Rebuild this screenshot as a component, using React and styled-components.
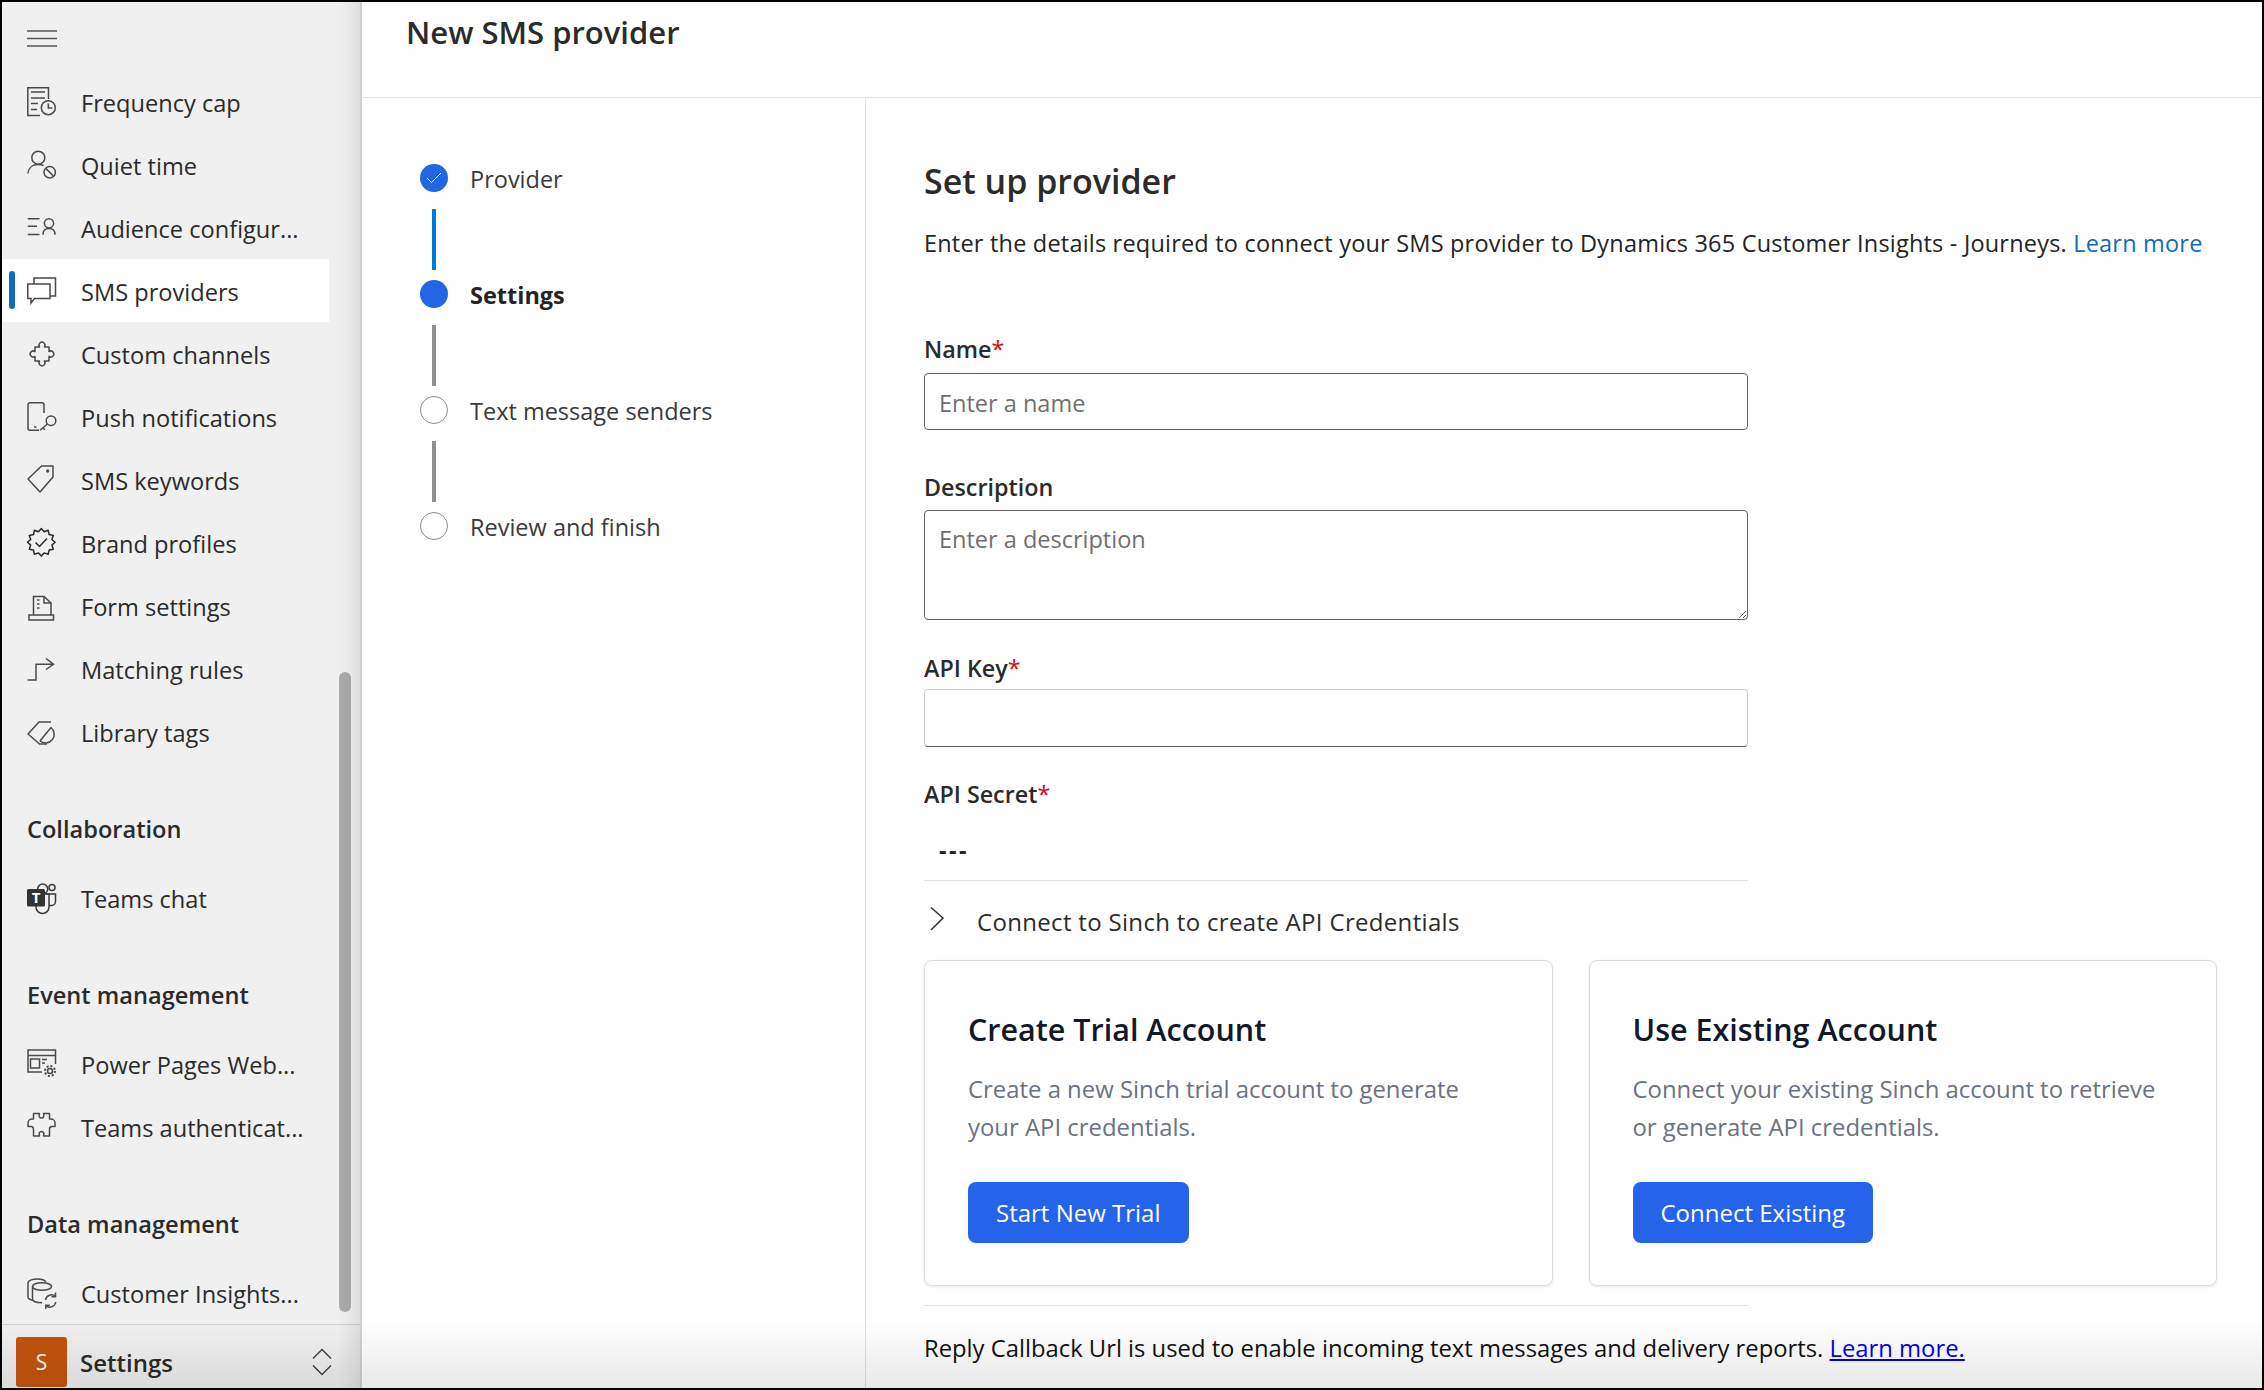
import React from "react";
import styled, { createGlobalStyle } from "styled-components";

const GlobalStyle = createGlobalStyle`
  html, body { margin: 0; padding: 0; background: #fff; }
  * { box-sizing: border-box; }
  body { font-family: "Open Sans", "Noto Sans", sans-serif; color: #242424; }
`;

const Frame = styled.div`
  position: relative;
  display: flex;
  width: 2264px;
  height: 1390px;
  border: 2px solid #000;
  overflow: hidden;
  background: #fff;
`;
const BottomFade = styled.div`
  position: absolute;
  left: 0;
  right: 0;
  bottom: 0;
  height: 68px;
  pointer-events: none;
  background: linear-gradient(rgba(0, 0, 0, 0), rgba(0, 0, 0, 0.09));
`;
const Sidebar = styled.aside`
  position: relative;
  flex: 0 0 360px;
  display: flex;
  flex-direction: column;
  background: #f0f0f0;
  border-right: 2px solid #cfcfcf;
  &:after {
    content: "";
    position: absolute;
    top: 0;
    right: 0;
    bottom: 0;
    width: 22px;
    pointer-events: none;
    background: linear-gradient(90deg, rgba(0, 0, 0, 0), rgba(0, 0, 0, 0.07));
  }
`;
const Hamburger = styled.div`
  height: 68.3px;
  padding: 28px 0 0 25px;
  svg {
    display: block;
  }
`;
const IconSvg = styled.svg`
  flex: 0 0 30px;
  width: 30px;
  height: 30px;
  overflow: visible;
`;
const TeamsLetter = styled.text`
  font-family: "Open Sans", sans-serif;
  font-size: 15px;
  font-weight: 700;
  fill: #fff;
  stroke: none;
`;
const NavRow = styled.div`
  position: relative;
  display: flex;
  align-items: center;
  gap: 24px;
  width: 327px;
  height: 63px;
  padding-left: 25px;
  font-size: 23.6px;
  white-space: nowrap;
  color: #2b2b2b;
  background: ${(p) => (p.$active ? "#fff" : "transparent")};
  span {
    position: relative;
    top: 1.5px;
  }
  &:before {
    content: "";
    display: ${(p) => (p.$active ? "block" : "none")};
    position: absolute;
    left: 7px;
    top: 12px;
    width: 6px;
    height: 38px;
    border-radius: 3px;
    background: #0f6cbd;
  }
`;
const GroupTitle = styled.div`
  display: flex;
  align-items: center;
  height: 63px;
  margin: 34.5px 0 5.5px;
  padding-left: 25px;
  font-size: 23.6px;
  font-weight: 600;
  color: #2b2b2b;
`;
const ScrollThumb = styled.div`
  position: absolute;
  left: 337px;
  top: 670px;
  width: 12px;
  height: 640px;
  border-radius: 6px;
  background: #ababab;
`;
const SidebarFooter = styled.div`
  display: flex;
  align-items: center;
  flex: 1;
  padding: 11px 28px 0 14px;
  border-top: 1.5px solid #d2d2d2;
`;
const Avatar = styled.div`
  display: flex;
  align-items: center;
  justify-content: center;
  width: 51px;
  height: 50px;
  border-radius: 3px;
  background: #c4550e;
  color: #fff;
  font-size: 21px;
`;
const AreaName = styled.div`
  flex: 1;
  margin-left: 13px;
  font-size: 24px;
  font-weight: 600;
  color: #2b2b2b;
`;
const Main = styled.main`
  flex: 1;
  display: flex;
  flex-direction: column;
  min-width: 0;
`;
const Header = styled.header`
  flex: 0 0 95.5px;
  padding: 9px 0 0 44px;
  border-bottom: 1.5px solid #e1e1e1;
  font-size: 31px;
  line-height: 42px;
  font-weight: 600;
  color: #2b2b2b;
`;
const Body = styled.div`
  flex: 1;
  display: flex;
  min-height: 0;
`;
const StepPanel = styled.nav`
  flex: 0 0 504px;
  padding: 66px 0 0 58px;
  border-right: 1.5px solid #e1e1e1;
`;
const Step = styled.div`
  display: flex;
  align-items: center;
  gap: 22px;
  height: 28px;
`;
const StepDot = styled.div`
  display: flex;
  align-items: center;
  justify-content: center;
  width: 28px;
  height: 28px;
  border-radius: 50%;
  border: ${(p) => (p.$state === "todo" ? "1px solid #8a8a8a" : "none")};
  background: ${(p) => (p.$state === "todo" ? "#fff" : "#2266e3")};
`;
const StepLabel = styled.span`
  position: relative;
  top: 1px;
  font-size: 23.5px;
  font-weight: ${(p) => (p.$state === "current" ? 700 : 400)};
  color: ${(p) => (p.$state === "current" ? "#242424" : "#3a3a3a")};
`;
const Connector = styled.div`
  width: 4px;
  height: 61px;
  margin: 17px 0 10px 12px;
  background: ${(p) => (p.$done ? "#0078d4" : "#8f8f8f")};
`;
const Content = styled.section`
  flex: 1;
  min-width: 0;
  padding: 63px 45px 0 58px;
`;
const Heading = styled.h2`
  margin: 0;
  font-size: 34px;
  line-height: 40px;
  font-weight: 600;
  color: #2b2b2b;
`;
const Intro = styled.p`
  margin: 28px 0 0;
  font-size: 23.5px;
  line-height: 28px;
  letter-spacing: 0.2px;
  white-space: nowrap;
  color: #242424;
`;
const BlueLink = styled.a`
  color: #0f6cbd;
  text-decoration: none;
`;
const FieldLabel = styled.div`
  margin-top: ${(p) => p.$top}px;
  font-size: 23.3px;
  line-height: 28px;
  font-weight: 600;
  color: #2b2b2b;
`;
const Required = styled.span`
  color: #e00000;
  font-weight: 400;
`;
const TextInput = styled.input`
  display: block;
  width: 824px;
  height: 57px;
  margin-top: 10px;
  padding: 3px 14px 0;
  border: 1.5px solid #616161;
  border-radius: 4px;
  outline: none;
  font: inherit;
  font-size: 23.5px;
  &::placeholder {
    color: #707070;
  }
`;
const KeyInput = styled(TextInput)`
  height: 58px;
  margin-top: 7px;
  border-color: #d1d1d1;
  border-bottom-color: #616161;
`;
const TextArea = styled.textarea`
  display: block;
  width: 824px;
  height: 110px;
  margin-top: 9px;
  padding: 12px 14px;
  border: 1.5px solid #616161;
  border-radius: 4px;
  outline: none;
  font: inherit;
  font-size: 23.5px;
  &::placeholder {
    color: #707070;
  }
`;
const ReadOnly = styled.div`
  width: 824px;
  height: 73px;
  padding: 28px 0 0 15px;
  border-bottom: 1.5px solid #e1e1e1;
  font-size: 23.5px;
  line-height: 28px;
  font-weight: 700;
  letter-spacing: 2.5px;
  color: #242424;
`;
const Accordion = styled.div`
  display: flex;
  align-items: center;
  height: 28px;
  margin-top: 27px;
  padding-left: 5px;
  font-size: 24px;
  font-weight: 500;
  letter-spacing: 0.32px;
  color: #2b2b2b;
  svg {
    position: relative;
    top: -3px;
  }
  span {
    margin-left: 32px;
  }
`;
const Cards = styled.div`
  display: grid;
  grid-template-columns: 1fr 1fr;
  gap: 36px;
  margin-top: 24px;
`;
const Card = styled.div`
  height: 326px;
  padding: 48px 43px 0;
  border: 1.5px solid #dcdce0;
  border-radius: 8px;
  box-shadow: 0 1px 3px rgba(0, 0, 0, 0.1);
`;
const CardTitle = styled.h3`
  margin: 0;
  font-size: 30.5px;
  line-height: 40px;
  font-weight: 600;
  color: #111827;
`;
const CardText = styled.p`
  margin: 21.5px 0 0;
  font-size: 23.9px;
  line-height: 38px;
  color: #6b7280;
`;
const PrimaryButton = styled.button`
  display: block;
  height: 61px;
  margin-top: 35.5px;
  padding: 0 28px;
  border: none;
  border-radius: 8px;
  background: #2563eb;
  color: #fff;
  font: inherit;
  font-size: 24px;
`;
const Rule = styled.div`
  width: 824px;
  height: 1.5px;
  margin-top: 19px;
  background: #e1e1e1;
`;
const Reply = styled.p`
  margin: 28px 0 0;
  font-size: 23.8px;
  line-height: 28px;
  white-space: nowrap;
  color: #111;
`;
const ReplyLink = styled.a`
  color: #0000ee;
  text-decoration: underline;
`;

const badgePath = () => {
  const pts = [];
  const n = 12;
  for (let i = 0; i < n * 2; i++) {
    const r = i % 2 === 0 ? 13.8 : 11;
    const a = (Math.PI * i) / n - Math.PI / 2;
    pts.push(`${(14.3 + r * Math.cos(a)).toFixed(1)} ${(14.3 + r * Math.sin(a)).toFixed(1)}`);
  }
  return `M${pts.join("L")}Z`;
};

const Glyph = ({ children, dark }) => (
  <IconSvg viewBox="0 0 30 30" fill="none" stroke={dark ? "#2a2a2a" : "#4a4a4a"} strokeWidth="1.5">
    {children}
  </IconSvg>
);

const icons = {
  frequency: (
    <Glyph>
      <path d="M21.5 12V.8H.8v27.7H13" />
      <path d="M4 5h14M4 11h14M4 16.5h7M4 22.5h6" />
      <circle cx="21.3" cy="20.7" r="7" />
      <path d="M21.3 16.5v4.5h4" />
    </Glyph>
  ),
  quiet: (
    <Glyph>
      <circle cx="11.3" cy="7.7" r="6.5" />
      <path d="M.8 23.5C1.5 17.5 6 14.5 11 14.5c2 0 4 .4 5.5 1" />
      <circle cx="22.7" cy="22.3" r="5.7" />
      <path d="M18.8 18.4l7.8 7.8" />
    </Glyph>
  ),
  audience: (
    <Glyph>
      <path d="M.8 5.7h11.7M.8 13.3H10M.8 21.5h11.7" />
      <circle cx="22" cy="10.3" r="4.6" />
      <path d="M16 21.7c0-4.2 2.5-6.2 6-6.2s6 2 6 6.2" />
    </Glyph>
  ),
  sms: (
    <Glyph>
      <path d="M.8 8H23v14.5H7.5L4 27v-4.5H.8z" />
      <path d="M7 8V2h21.5v18H23" />
    </Glyph>
  ),
  custom: (
    <Glyph>
      <path d="M8 8h4.600a3 3 0 1 1 4.800 0H22v4.600a3 3 0 1 1 0 4.800V22h-4.600a3 3 0 1 1-4.800 0H8v-4.600a3 3 0 1 1 0-4.800z" strokeLinejoin="round" />
    </Glyph>
  ),
  push: (
    <Glyph>
      <path d="M12 28.3H3a2 2 0 0 1-2-2V2.7a2 2 0 0 1 2-2h12a2 2 0 0 1 2 2V11" />
      <path d="M7 25h2.5" />
      <circle cx="24" cy="18.7" r="4.8" />
      <path d="M20.5 22l-7.5 6.3M16 26l1.8 1.8" />
    </Glyph>
  ),
  keywords: (
    <Glyph>
      <path d="M14.5 1H26v11L13 27 1 14z" strokeLinejoin="round" />
      <circle cx="20.7" cy="6" r=".9" fill="#4a4a4a" />
    </Glyph>
  ),
  brand: (
    <Glyph dark>
      <path d={badgePath()} strokeLinejoin="round" />
      <path d="M8.5 14.5l4 4 7.5-8" />
    </Glyph>
  ),
  form: (
    <Glyph>
      <path d="M6.5 24V5.5H17l7 6.5v12" />
      <path d="M17 5.5V12h7" />
      <path d="M2 24h24.5v5H2z" />
      <path d="M10 9h2.5M10 13h2.5M10 17h2.5" />
    </Glyph>
  ),
  matching: (
    <Glyph>
      <path d="M.5 26H9V10.3h17.5" />
      <path d="M19 4.5l7.5 5.8-7.5 5.2" />
    </Glyph>
  ),
  tags: (
    <Glyph>
      <path d="M24 5H12L1 17l11.5 10H20" strokeLinejoin="round" />
      <path d="M24 10.5A8 8 0 1 1 13 24" />
      <path d="M13 24l11-13.5" />
    </Glyph>
  ),
  teams: (
    <IconSvg viewBox="0 0 30 30" fill="none" stroke="#3a3a3a" strokeWidth="1.5">
      <circle cx="15.7" cy="6" r="5" />
      <circle cx="25" cy="4.5" r="3" />
      <path d="M19 11h9.5v7.5a4 4 0 0 1-4 4H22" />
      <path d="M9 23v1a6.5 6.5 0 0 0 13 0V11h-4" />
      <rect x="0" y="6" width="18" height="17.5" rx="1.5" fill="#333" stroke="none" />
      <TeamsLetter x="9" y="20" textAnchor="middle">T</TeamsLetter>
    </IconSvg>
  ),
  pages: (
    <Glyph>
      <path d="M15 23H1V1h27.5v14" />
      <path d="M1 6.5h27.5M3.5 10h9v9h-9zM15 10.5h5M15 14h3" />
      <circle cx="23" cy="22" r="2.5" />
      <circle cx="23" cy="22" r="5" strokeWidth="2" strokeDasharray="2 1.9" />
    </Glyph>
  ),
  auth: (
    <Glyph>
      <path d="M6.5 7V1.5h6c-1 3 0 4.5 2 4.5s3-1.5 2-4.5h6V7h1.5a4 4 0 0 1 4 4v3.5h-3c-1.8 0-2.5 1-2.5 2.5V24h-6c1-3 0-4.5-2-4.5s-3 1.5-2 4.5h-6v-6.5c0-2-1-3-2.5-3h-3V11a4 4 0 0 1 4-4z" strokeLinejoin="round" />
    </Glyph>
  ),
  insights: (
    <Glyph>
      <path d="M19 4c-1-1.7-4.5-3-8.5-3C5 1 1 2.7 1 5v14c0 1.5 2 2.7 4.5 3.3" />
      <ellipse cx="15" cy="8.5" rx="9.5" ry="3.8" />
      <path d="M5.5 8.5V21c0 2 3.5 3.8 9.5 3.8" />
      <path d="M18.5 22a6 6 0 0 1 10-3.5M28.5 14.5v4.2h-4M28.8 24a6 6 0 0 1-10 3.5M18.8 31v-3.7h4" />
    </Glyph>
  ),
};

const sections = [
  {
    items: [
      ["frequency", "Frequency cap"],
      ["quiet", "Quiet time"],
      ["audience", "Audience configur..."],
      ["sms", "SMS providers", true],
      ["custom", "Custom channels"],
      ["push", "Push notifications"],
      ["keywords", "SMS keywords"],
      ["brand", "Brand profiles"],
      ["form", "Form settings"],
      ["matching", "Matching rules"],
      ["tags", "Library tags"],
    ],
  },
  { title: "Collaboration", items: [["teams", "Teams chat"]] },
  {
    title: "Event management",
    items: [
      ["pages", "Power Pages Web..."],
      ["auth", "Teams authenticat..."],
    ],
  },
  { title: "Data management", items: [["insights", "Customer Insights..."]] },
];

const steps = [
  { label: "Provider", state: "done" },
  { label: "Settings", state: "current" },
  { label: "Text message senders", state: "todo" },
  { label: "Review and finish", state: "todo" },
];

export default function App() {
  return (
    <>
      <GlobalStyle />
      <Frame>
        <Sidebar>
          <Hamburger>
            <svg width="30" height="17" viewBox="0 0 30 17" stroke="#555" strokeWidth="1.5">
              <path d="M0 1h30M0 8.5h30M0 16h30" />
            </svg>
          </Hamburger>
          {sections.map((section, i) => (
            <div key={i}>
              {section.title && <GroupTitle>{section.title}</GroupTitle>}
              {section.items.map(([icon, label, active]) => (
                <NavRow key={label} $active={active}>
                  {icons[icon]}
                  <span>{label}</span>
                </NavRow>
              ))}
            </div>
          ))}
          <ScrollThumb />
          <SidebarFooter>
            <Avatar>S</Avatar>
            <AreaName>Settings</AreaName>
            <svg width="20" height="28" viewBox="0 0 20 28" fill="none" stroke="#444" strokeWidth="1.5">
              <path d="M1 10.5L10 1.5l9 9M1 17.5l9 9 9-9" />
            </svg>
          </SidebarFooter>
        </Sidebar>
        <Main>
          <Header>New SMS provider</Header>
          <Body>
            <StepPanel>
              {steps.map((step, i) => (
                <div key={step.label}>
                  <Step>
                    <StepDot $state={step.state}>
                      {step.state === "done" && (
                        <svg width="16" height="12" viewBox="0 0 16 12" fill="none" stroke="#fff" strokeWidth="1">
                          <path d="M1 6l4.5 4.5L15 1" />
                        </svg>
                      )}
                    </StepDot>
                    <StepLabel $state={step.state}>{step.label}</StepLabel>
                  </Step>
                  {i < steps.length - 1 && <Connector $done={step.state === "done"} />}
                </div>
              ))}
            </StepPanel>
            <Content>
              <Heading>Set up provider</Heading>
              <Intro>
                Enter the details required to connect your SMS provider to Dynamics 365 Customer Insights - Journeys.{" "}
                <BlueLink href="#">Learn more</BlueLink>
              </Intro>
              <FieldLabel $top={78}>
                Name<Required>*</Required>
              </FieldLabel>
              <TextInput placeholder="Enter a name" />
              <FieldLabel $top={43}>Description</FieldLabel>
              <TextArea placeholder="Enter a description" />
              <FieldLabel $top={34}>
                API Key<Required>*</Required>
              </FieldLabel>
              <KeyInput />
              <FieldLabel $top={33}>
                API Secret<Required>*</Required>
              </FieldLabel>
              <ReadOnly>---</ReadOnly>
              <Accordion>
                <svg width="16" height="26" viewBox="0 0 16 26" fill="none" stroke="#333" strokeWidth="1.5">
                  <path d="M2 1.5L14 12 2 24" />
                </svg>
                <span>Connect to Sinch to create API Credentials</span>
              </Accordion>
              <Cards>
                <Card>
                  <CardTitle>Create Trial Account</CardTitle>
                  <CardText>Create a new Sinch trial account to generate your API credentials.</CardText>
                  <PrimaryButton>Start New Trial</PrimaryButton>
                </Card>
                <Card>
                  <CardTitle>Use Existing Account</CardTitle>
                  <CardText>Connect your existing Sinch account to retrieve or generate API credentials.</CardText>
                  <PrimaryButton>Connect Existing</PrimaryButton>
                </Card>
              </Cards>
              <Rule />
              <Reply>
                Reply Callback Url is used to enable incoming text messages and delivery reports.{" "}
                <ReplyLink href="#">Learn more.</ReplyLink>
              </Reply>
            </Content>
          </Body>
        </Main>
        <BottomFade />
      </Frame>
    </>
  );
}
